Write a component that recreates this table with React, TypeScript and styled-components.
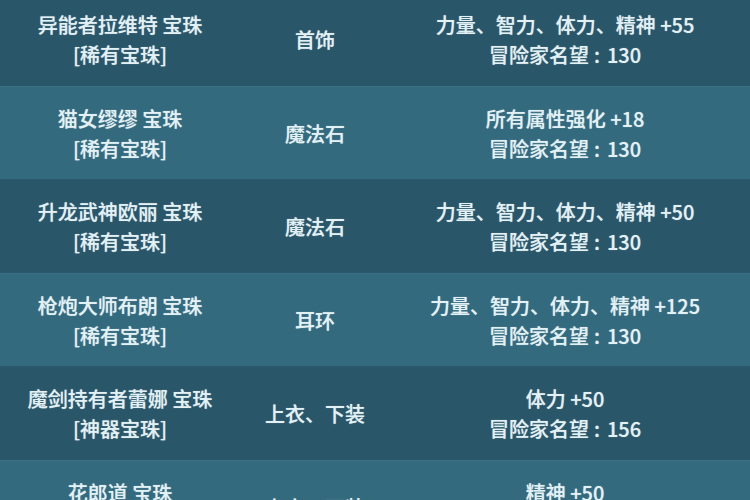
import React from 'react';
import styled, { createGlobalStyle } from 'styled-components';

const GlobalStyle = createGlobalStyle`
  html, body {
    margin: 0;
    padding: 0;
    background: #2a5669;
    overflow: hidden;
  }
`;

const Table = styled.div`
  width: 750px;
  height: 500px;
  overflow: hidden;
  font-family: "Noto Sans CJK SC", "Noto Sans", sans-serif;
  color: #e2f1f5;
`;

const Rows = styled.div`
  display: flex;
  flex-direction: column;
  margin-top: -8px;
`;

const Row = styled.div<{ $alt: boolean }>`
  display: grid;
  grid-template-columns: 240px 150px 1fr;
  padding-right: 10px;
  height: 93.5px;
  box-sizing: border-box;
  background: ${p => (p.$alt ? '#346a7e' : '#2a5669')};
  border-top: 1px solid ${p => (p.$alt ? '#3a7084' : '#2c586b')};
`;

const Cell = styled.div`
  display: flex;
  flex-direction: column;
  align-items: center;
  justify-content: center;
  text-align: center;
  font-size: 20px;
  line-height: 30px;
  font-weight: 500;
  white-space: nowrap;
  padding-top: 2px;
  text-shadow: 0 0 1px rgba(226, 241, 245, 0.6);
`;

const Colon = styled.span`
  margin: 0 7px 0 5px;
`;

interface Gem {
  name: string;
  grade: string;
  slot: string;
  stat: string;
  fame: number;
}

const gems: Gem[] = [
  { name: '异能者拉维特 宝珠', grade: '[稀有宝珠]', slot: '首饰', stat: '力量、智力、体力、精神 +55', fame: 130 },
  { name: '猫女缪缪 宝珠', grade: '[稀有宝珠]', slot: '魔法石', stat: '所有属性强化 +18', fame: 130 },
  { name: '升龙武神欧丽 宝珠', grade: '[稀有宝珠]', slot: '魔法石', stat: '力量、智力、体力、精神 +50', fame: 130 },
  { name: '枪炮大师布朗 宝珠', grade: '[稀有宝珠]', slot: '耳环', stat: '力量、智力、体力、精神 +125', fame: 130 },
  { name: '魔剑持有者蕾娜 宝珠', grade: '[神器宝珠]', slot: '上衣、下装', stat: '体力 +50', fame: 156 },
  { name: '花郎道 宝珠', grade: '[神器宝珠]', slot: '上衣、下装', stat: '精神 +50', fame: 156 },
];

export default function App() {
  return (
    <>
      <GlobalStyle />
      <Table>
        <Rows>
          {gems.map((g, i) => (
            <Row key={g.name} $alt={i % 2 === 1}>
              <Cell>
                <span>{g.name}</span>
                <span>{g.grade}</span>
              </Cell>
              <Cell>
                <span>{g.slot}</span>
              </Cell>
              <Cell>
                <span>{g.stat}</span>
                <span>
                  冒险家名望<Colon>:</Colon>{g.fame}
                </span>
              </Cell>
            </Row>
          ))}
        </Rows>
      </Table>
    </>
  );
}
